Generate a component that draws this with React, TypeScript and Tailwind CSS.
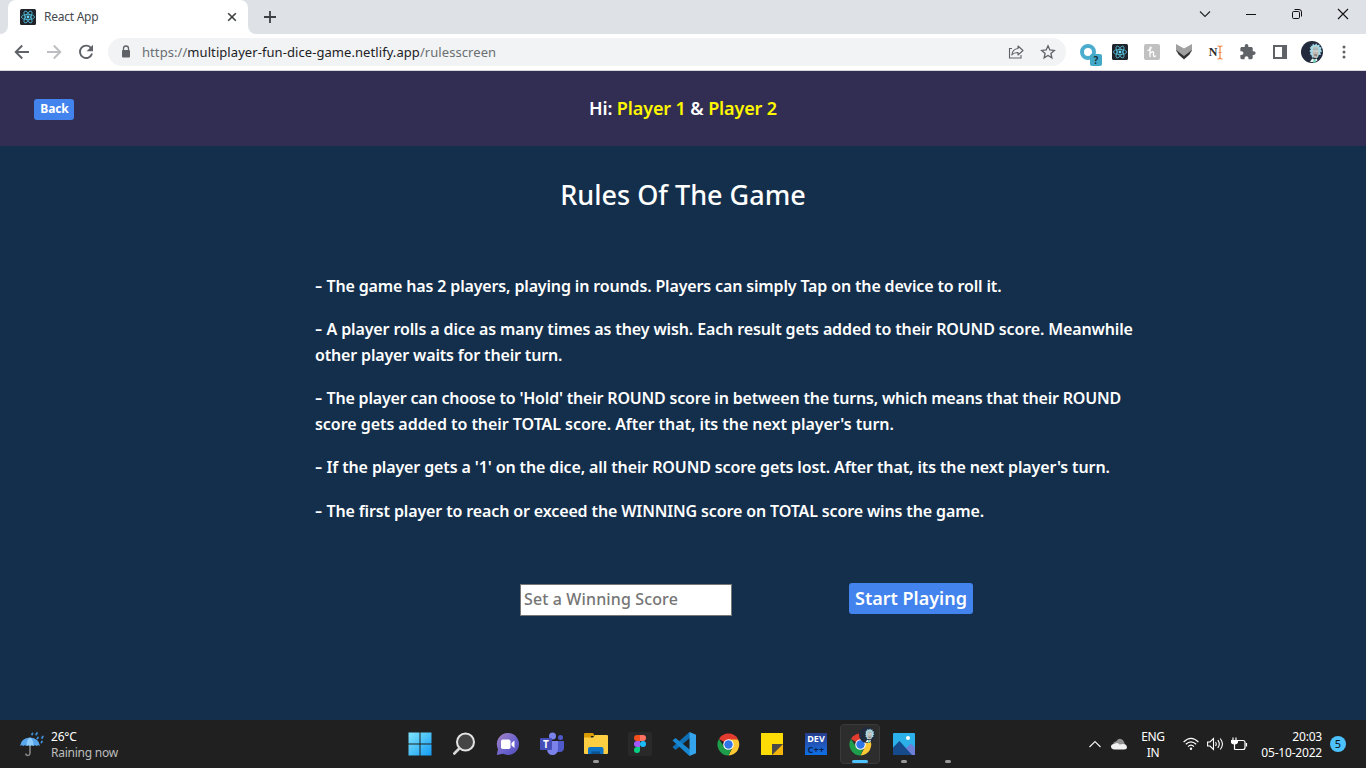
import type { ReactNode } from "react";

const cell = "flex h-full w-11 shrink-0 items-center justify-center relative";

function ReactMark({ size }: { size: number }) {
  return (
    <svg width={size} height={size} viewBox="0 0 16 16">
      <rect width="16" height="16" rx="1.5" fill="#20232a" />
      <g fill="none" stroke="#53c1de" strokeWidth="0.8">
        <ellipse cx="8" cy="8" rx="6.6" ry="2.6" />
        <ellipse cx="8" cy="8" rx="6.6" ry="2.6" transform="rotate(60 8 8)" />
        <ellipse cx="8" cy="8" rx="6.6" ry="2.6" transform="rotate(120 8 8)" />
      </g>
      <circle cx="8" cy="8" r="1.4" fill="#61dafb" />
    </svg>
  );
}

function Avatar({ size }: { size: number }) {
  return (
    <svg width={size} height={size} viewBox="0 0 22 22">
      <circle cx="11" cy="11" r="11" fill="#222a3d" />
      <path d="M9.5 4.500l1.600.600.900-2.600 1.600 1.700 1.800-2 .800 2 2.400-.600-.200 2.300 2.500.600-1.300 2 1.600 1.800-2 1.200.800 2.300-2.300.200-.700 2.400h-6l-.600-2.500-1.600-.600 1-1.800-1.500-1.600 1.600-1.400-1.300-1.900 1.700-.700z" fill="#a5d9e6" />
      <path d="M12 6.500q3-1.800 5.200.300l.200 6q-.800 4.400-2.800 4.400-2.400-.400-2.900-4.200z" fill="#bfb9b2" />
      <path d="M12 8.300h5.300" stroke="#7fb3c1" strokeWidth="0.8" />
      <circle cx="13.400" cy="9.700" r="1" fill="#f4f4f4" />
      <circle cx="16" cy="9.700" r="1" fill="#f4f4f4" />
      <path d="M13.400 9.500v.600M16 9.500v.600M13.200 14H16" stroke="#4a4a50" strokeWidth="0.8" />
      <path d="M9 20.800l2.200-3.400 2.600 1.200 2.100-1 .500 2.100A11 11 0 0 1 9 20.800z" fill="#e9f3f2" />
      <path d="M12.500 18.200l1.300.700 1-.500-.500 3.100-1.900.400z" fill="#63d2b4" />
    </svg>
  );
}

function ChromeMark({ size }: { size: number }) {
  return (
    <svg width={size} height={size} viewBox="0 0 24 24">
      <path d="M12 12L2.040 6.250A11.500 11.500 0 0 1 21.960 6.250z" fill="#e33b2e" />
      <path d="M12 6.750h9.960A11.500 11.500 0 0 1 12 23.500l4.550-8.870z" fill="#fcc934" />
      <path d="M2.040 6.250l5.410 8.380L12 17.250l3-.600-3 6.850A11.500 11.500 0 0 1 2.040 6.250z" fill="#1e9e4a" />
      <circle cx="12" cy="12" r="5.500" fill="#fff" />
      <circle cx="12" cy="12" r="4.400" fill="#2f75e8" />
    </svg>
  );
}

function TabStrip() {
  return (
    <div className="flex h-[34px] items-stretch bg-[#dee1e6]">
      <div className="flex w-2 items-end bg-white">
        <div className="h-full w-full rounded-br-lg bg-[#dee1e6]" />
      </div>
      <div className="flex w-60 items-center rounded-t-lg bg-white pl-3 pr-2">
        <ReactMark size={16} />
        <span className="ml-2 whitespace-nowrap text-[12px] tracking-[-0.25px] text-[#45494d]">React App</span>
        <svg className="ml-auto shrink-0" width="16" height="16" viewBox="0 0 16 16" fill="none" stroke="#3c4043" strokeWidth="1.600">
          <path d="M4.200 4.200l7.600 7.600M11.800 4.200l-7.600 7.600" />
        </svg>
      </div>
      <div className="flex w-2 bg-white">
        <div className="h-full w-full rounded-bl-lg bg-[#dee1e6]" />
      </div>
      <div className="flex w-7 items-center justify-center">
        <svg width="14" height="14" viewBox="0 0 14 14" stroke="#3c4043" strokeWidth="1.800">
          <path d="M7 1v12M1 7h12" />
        </svg>
      </div>
      <div className="ml-auto flex h-7">
        <div className="flex w-[46px] items-center justify-center">
          <svg width="12" height="12" viewBox="0 0 12 12" fill="none" stroke="#222" strokeWidth="1.100"><path d="M1 3.500l5 5 5-5" /></svg>
        </div>
        <div className="flex w-[46px] items-center justify-center">
          <svg width="12" height="12" viewBox="0 0 12 12" stroke="#111"><path d="M1 6.500h10" /></svg>
        </div>
        <div className="flex w-[46px] items-center justify-center">
          <svg width="12" height="12" viewBox="0 0 12 12" fill="none" stroke="#111"><rect x="1.500" y="3.500" width="7" height="7" rx="1.200" /><path d="M3.500 1.500h4.500q2.500 0 2.500 2.500v4.500" /></svg>
        </div>
        <div className="flex w-[46px] items-center justify-center">
          <svg width="12" height="12" viewBox="0 0 12 12" stroke="#111" strokeWidth="1.100"><path d="M1 1l10 10M11 1L1 11" /></svg>
        </div>
      </div>
    </div>
  );
}

function Slot({ children }: { children: ReactNode }) {
  return <div className="relative flex h-full w-8 shrink-0 items-center justify-center">{children}</div>;
}

function Toolbar() {
  return (
    <div className="flex h-[37px] items-center border-b border-[#d5d7da] bg-white pl-1.5">
      <Slot>
        <svg width="16" height="16" viewBox="0 0 16 16" fill="none" stroke="#5f6368" strokeWidth="1.900"><path d="M15 8H2.200M8.200 1.500L1.700 8l6.500 6.500" /></svg>
      </Slot>
      <Slot>
        <svg width="16" height="16" viewBox="0 0 16 16" fill="none" stroke="#bcbec1" strokeWidth="1.900"><path d="M1 8h12.800M7.800 1.500L14.300 8l-6.500 6.500" /></svg>
      </Slot>
      <Slot>
        <svg width="16" height="16" viewBox="0 0 16 16" fill="none"><path d="M13.200 4.200A6.200 6.200 0 1 0 14.100 9.600" stroke="#5f6368" strokeWidth="1.900" /><path d="M15 .800v6.400H8.600z" fill="#5f6368" /></svg>
      </Slot>
      <div className="ml-1.5 flex h-7 w-[958px] items-center rounded-full bg-[#f1f3f4] pl-[13px]">
        <svg width="10" height="14" viewBox="0 0 10 14"><path d="M2.500 6V3.500a2.500 2.500 0 0 1 5 0V6" fill="none" stroke="#5f6368" strokeWidth="1.300" /><rect x="1" y="5" width="8" height="7.500" rx="1" fill="#5f6368" /></svg>
        <span className="ml-[11px] mt-0.5 whitespace-nowrap text-[13px] tracking-[0.07px] text-[#6b6f73]">https://<span className="text-[#202124]">multiplayer-fun-dice-game.netlify.app</span>/rulesscreen</span>
        <svg className="ml-auto" width="16" height="16" viewBox="0 0 16 16" fill="none" stroke="#5f6368" strokeWidth="1.100"><path d="M4 4.500H1.500v9.500h11.500v-3" /><path d="M10 2l5 4.500-5 4.500V8.500q-4-.200-6.200 2.500Q4.500 5 10 4.500z" strokeLinejoin="round" /></svg>
        <svg className="ml-4 mr-2.5" width="16" height="16" viewBox="0 0 16 16" fill="none" stroke="#5f6368" strokeWidth="1.300"><path d="M8 1.800l1.800 4.200 4.500.400-3.400 3 1 4.400L8 11.500l-3.900 2.300 1-4.400-3.400-3 4.500-.400z" /></svg>
      </div>
      <div className="ml-1.5 flex h-full items-center">
        <Slot>
          <svg width="24" height="24" viewBox="0 0 24 24"><circle cx="12" cy="12" r="6" fill="none" stroke="#4bacce" strokeWidth="4" /></svg>
          <span className="absolute left-[18px] top-5 flex h-3 w-3 items-center justify-center rounded-[2px] bg-[#43a9c9] text-[10px] font-bold leading-none text-[#17323b]">?</span>
        </Slot>
        <Slot><ReactMark size={16} /></Slot>
        <Slot>
          <span className="flex h-4 w-4 items-center justify-center rounded-[2px] bg-[#c1c1c1]">
            <svg width="12" height="12" viewBox="0 0 12 12" fill="none" stroke="#fff" strokeWidth="1.300" strokeLinecap="round"><path d="M2 4.500Q5.500 3 5 1.200 4 .500 4 3.500v7M4 7.500Q7.500 4 7.500 7v2.500q.200 1.800 2 .500" /></svg>
          </span>
        </Slot>
        <Slot>
          <svg width="16" height="16" viewBox="0 0 16 16"><path d="M0 0l8 4.500L16 0v7l-8 6-8-6z" fill="#a0a0a0" /><path d="M0 6l8 6 8-6-2.500 4.500L8 15.500l-5.500-5z" fill="#333" /></svg>
        </Slot>
        <Slot>
          <span className="font-['Liberation_Serif',serif] text-[12px] font-bold text-[#2d2d2d]">N</span>
          <svg width="6" height="15" viewBox="0 0 6 15" fill="none" stroke="#ee8747" strokeWidth="1.200"><path d="M.500 1Q3 1 3 2.500v10Q3 14 .500 14M5.500 1Q3 1 3 2.500M5.500 14Q3 14 3 12.500M1.500 7.500h3" /></svg>
        </Slot>
        <Slot>
          <svg width="16" height="16" viewBox="1.500 1 22 22" fill="#5f6368"><path d="M20.500 11H19V7c0-1.100-.900-2-2-2h-4V3.500a2.500 2.500 0 0 0-5 0V5H4c-1.100 0-2 .900-2 2v3.800h1.500a2.700 2.700 0 0 1 0 5.400H2V20c0 1.100.900 2 2 2h3.800v-1.500a2.700 2.700 0 0 1 5.400 0V22H17c1.100 0 2-.900 2-2v-4h1.500a2.500 2.500 0 0 0 0-5z" /></svg>
        </Slot>
        <Slot>
          <svg width="14" height="14" viewBox="0 0 14 14"><rect x="1" y="1" width="12" height="12" fill="none" stroke="#5f6368" strokeWidth="2" /><path d="M9 1h5v12H9z" fill="#5f6368" /></svg>
        </Slot>
        <Slot><Avatar size={22} /></Slot>
        <Slot>
          <svg width="4" height="14" viewBox="0 0 4 14" fill="#5f6368"><circle cx="2" cy="2" r="1.500" /><circle cx="2" cy="7" r="1.500" /><circle cx="2" cy="12" r="1.500" /></svg>
        </Slot>
      </div>
    </div>
  );
}

type Line = { text: string; track: string };

const rules: Line[][] = [
  [{ text: "The game has 2 players, playing in rounds. Players can simply Tap on the device to roll it.", track: "tracking-[-0.15px]" }],
  [
    { text: "A player rolls a dice as many times as they wish. Each result gets added to their ROUND score. Meanwhile", track: "tracking-[-0.125px]" },
    { text: "other player waits for their turn.", track: "tracking-[-0.16px]" },
  ],
  [
    { text: "The player can choose to 'Hold' their ROUND score in between the turns, which means that their ROUND", track: "tracking-[-0.19px]" },
    { text: "score gets added to their TOTAL score. After that, its the next player's turn.", track: "tracking-[-0.045px]" },
  ],
  [{ text: "If the player gets a '1' on the dice, all their ROUND score gets lost. After that, its the next player's turn.", track: "tracking-[-0.12px]" }],
  [{ text: "The first player to reach or exceed the WINNING score on TOTAL score wins the game.", track: "tracking-[-0.132px]" }],
];

function Game() {
  return (
    <main className="flex h-[649px] flex-col bg-[#142f4c] font-['Noto_Sans',sans-serif] font-semibold text-white">
      <header className="grid h-[75px] grid-cols-[1fr_auto_1fr] items-center bg-[#322d52] px-[34px]">
        <button className="mt-0.5 flex h-[21px] w-10 items-center justify-center rounded-[3px] bg-[#4283ed] pb-px pl-px text-[12px] font-bold tracking-[-0.1px]">Back</button>
        <h2 className="whitespace-nowrap text-[18px] tracking-[-0.12px]">Hi: <span className="text-[#fff700]">Player 1</span> &amp; <span className="text-[#fff700]">Player 2</span></h2>
      </header>
      <h1 className="mt-7 text-center text-[27px] font-medium leading-[42px]">Rules Of The Game</h1>
      <div className="ml-[315px] mt-[57px] flex flex-col gap-[17.15px] text-[16px] leading-[26px]">
        {rules.map((lines) => (
          <p key={lines[0].text}>
            {lines.map((line, i) => (
              <span key={line.text} className={`block whitespace-nowrap ${line.track}`}>
                {i === 0 && <span className="tracking-[1.100px]"><span className="inline-block origin-left scale-x-140">-</span> </span>}
                {line.text}
              </span>
            ))}
          </p>
        ))}
      </div>
      <div className="ml-[520px] mt-[59.6px] flex items-start">
        <div className="mt-px flex h-8 w-[212px] items-center border border-[#767676] bg-white pb-0.5 pl-[3px] text-[16px] font-medium tracking-[0.13px] text-[#757575]">Set a Winning Score</div>
        <button className="ml-[117px] flex h-[31px] w-[124px] items-center justify-center whitespace-nowrap rounded-[3px] bg-[#4283ed] text-[18px]">Start Playing</button>
      </div>
    </main>
  );
}

function Dot() {
  return <span className="absolute bottom-[5px] left-[19px] h-[3px] w-1.5 rounded-full bg-[#9a9a9a]" />;
}

function Taskbar() {
  return (
    <footer className="grid h-12 grid-cols-[398px_572px_1fr] bg-[#202020] text-white">
      <div className="flex items-center pl-5">
        <svg width="25" height="25" viewBox="0 0 25 25" fill="none">
          <path d="M10 13v8.500q-.300 2-2.200 2t-2-2" stroke="#8b8b8b" strokeWidth="1.500" />
          <path d="M0 14Q1 6 10 5.500 19 6 20 14q-1.600-1.500-3.300 0-1.700-1.500-3.300 0-1.700-1.500-3.400 0-1.700-1.500-3.300 0-1.700-1.500-3.400 0Q1.500 12.500 0 14z" fill="#58a6ec" />
          <path d="M6.700 14Q6 8 10 5.500q4 2.500 3.400 8.500-1.700-1.500-3.400 0-1.700-1.500-3.300 0z" fill="#8dcbfb" />
          <path d="M12.500 1.500l-.500 1M17 1l-.800 1.500M18 5.500l-.600 1M22.800 4.500l-.800 1.500M22 9.500l-.600 1" stroke="#3c8dd9" strokeWidth="1.800" strokeLinecap="round" />
        </svg>
        <div className="ml-1.5 mt-0.5 text-[12px] leading-4">
          <div className="tracking-[-0.2px]">26°C</div>
          <div className="tracking-[-0.25px] text-[#bdbdbd]">Raining now</div>
        </div>
      </div>
      <div className="flex items-center">
        <div className={cell}>
          <svg className="mr-px" width="24" height="24" viewBox="0 0 24 24"><defs><linearGradient id="win" x1="0" y1="0" x2="1" y2="1"><stop stopColor="#80e5fb" /><stop offset="1" stopColor="#149cf5" /></linearGradient></defs><path d="M.500.500h11v11H.500zM12.500.500h11v11h-11zM.500 12.500h11v11H.500zM12.500 12.500h11v11h-11z" fill="url(#win)" /></svg>
        </div>
        <div className={cell}>
          <svg width="24" height="24" viewBox="0 0 24 24"><circle cx="13.500" cy="10" r="8.500" fill="#454545" stroke="#e4e4e4" strokeWidth="2" /><path d="M7.300 16.500l-5 5" stroke="#d8d8d8" strokeWidth="2.600" strokeLinecap="round" /></svg>
        </div>
        <div className={cell}>
          <svg width="24" height="24" viewBox="0 0 24 24"><defs><linearGradient id="chat" x1="0" y1="0" x2="1" y2="1"><stop stopColor="#a884c2" /><stop offset=".6" stopColor="#6862cf" /><stop offset="1" stopColor="#554bb5" /></linearGradient></defs><path d="M12 1a11 11 0 1 1-5 20.800L.800 23l1.200-6A11 11 0 0 1 12 1z" fill="url(#chat)" /><rect x="5" y="7.500" width="9.500" height="9.500" rx="1.800" fill="#fff" /><path d="M15.500 11l3-2.500v7.500l-3-2.500z" fill="#fff" /></svg>
        </div>
        <div className={cell}>
          <svg width="24" height="24" viewBox="0 0 24 24"><circle cx="12.500" cy="4" r="3.500" fill="#7b83eb" /><circle cx="20.500" cy="5.500" r="2.500" fill="#5059c9" /><path d="M17 9h7v7q-.500 4-4 4h-3z" fill="#5059c9" /><path d="M7 9h11v8q-.500 6-5.500 6T7 17z" fill="#7b83eb" /><rect x="0" y="6" width="12" height="12" rx="1" fill="#464eb8" /></svg>
          <span className="absolute left-[13px] top-[17px] text-[10px] font-bold leading-[14px]">T</span>
        </div>
        <div className={cell}>
          <svg width="24" height="24" viewBox="0 0 24 24"><path d="M0 2q0-1 1-1h8l2 3h-4l-1 5H0z" fill="#d99b05" /><path d="M0 5.500h9L11 3h12q1 0 1 1v17q0 1-1 1H1q-1 0-1-1z" fill="#fdce42" /><path d="M4 22v-5q0-2 2-2h11.500q2 0 2 2v5z" fill="#0e73c4" /><path d="M7.500 19.500h8.500V22H7.500z" fill="#0b5391" /></svg>
          <Dot />
        </div>
        <div className={cell}>
          <svg width="24" height="24" viewBox="0 0 24 24"><rect width="24" height="24" rx="2" fill="#292929" /><path d="M9 3h3v6H9a3 3 0 0 1 0-6z" fill="#f24e1e" /><path d="M12 3h3a3 3 0 0 1 0 6h-3z" fill="#ff7262" /><path d="M9 9h3v6H9a3 3 0 0 1 0-6z" fill="#a259ff" /><circle cx="15" cy="12" r="3" fill="#1abcfe" /><path d="M9 15h3v3a3 3 0 1 1-3-3z" fill="#0acf83" /></svg>
        </div>
        <div className={cell}>
          <svg width="24" height="24" viewBox="0 0 24 24"><path d="M.500 15L17.500 0l1.500 5L3.500 18z" fill="#0f6fb4" /><path d="M.500 8.500l3-2.500L19 18.500 17.500 24z" fill="#1887d2" /><path d="M17.500 0L24 2.800v18.400L17.500 24z" fill="#34a4ec" /></svg>
        </div>
        <div className={cell}><ChromeMark size={23} /></div>
        <div className={cell}>
          <svg width="22" height="22" viewBox="0 0 22 22"><path d="M0 0h22v11H11v11H0z" fill="#fddb05" /><path d="M11 11h11L11 22z" fill="#4a4a4a" /><path d="M22 11v11H11z" fill="#f6b50b" /></svg>
        </div>
        <div className={cell}>
          <div className="flex h-[22px] w-[22px] flex-col items-center bg-linear-to-b from-[#263c8c] to-[#0870e8] font-bold">
            <span className="text-[9px] leading-[12px]">DEV</span>
            <span className="text-[9px] leading-[10px] tracking-[0.3px] text-[#052452]">C++</span>
          </div>
        </div>
        <div className={cell}>
          <div className="flex h-10 w-10 items-center justify-center rounded-[4px] border border-[#3a3a3a] bg-[#2d2d2d]"><ChromeMark size={23} /></div>
          <span className="absolute left-[21px] top-[7px]"><Avatar size={16} /></span>
          <span className="absolute bottom-[5px] left-3.5 h-[3px] w-4 rounded-full bg-[#4cc2ff]" />
        </div>
        <div className={cell}>
          <svg width="22" height="22" viewBox="0 0 22 22"><rect width="22" height="22" rx="1" fill="#2bb0ea" /><circle cx="15" cy="5" r="2" fill="#fff" /><path d="M10 18l8-7.500 4 4V22H10z" fill="#6b80d6" /><path d="M0 14.500L6.500 8 19 22H0z" fill="#164a8a" /></svg>
          <Dot />
        </div>
        <div className={cell}><Dot /></div>
      </div>
      <div className="flex items-center pl-[118px]">
        <svg width="14" height="14" viewBox="0 0 14 14" fill="none" stroke="#eee" strokeWidth="1.200"><path d="M1.500 10L7 4.500l5.500 5.500" /></svg>
        <svg className="ml-[9px]" width="16" height="12" viewBox="0 0 16 12"><path d="M2 7Q2 3.500 5 3.500 7 0 10 1t3.500 4.500L16 8z" fill="#929292" /><path d="M3.500 11.500Q0 11.200 0 8.500T3.500 6Q6 4 8.500 6.500q6-2 7.500 2.500 0 2.500-3 2.500z" fill="#f1f1f1" /></svg>
        <div className="ml-3 mt-0.5 w-7 text-center text-[12px] leading-4 tracking-[-0.3px]"><div>ENG</div><div>IN</div></div>
        <svg className="ml-4" width="16" height="14" viewBox="0 0 16 14" fill="none" stroke="#fff" strokeWidth="1.200"><path d="M.600 5Q8-2.200 15.400 5M2.800 7.300q5.200-5 10.400 0M5 9.600q3-2.800 6 0" /><circle cx="8" cy="11.800" r="1.200" fill="#fff" stroke="none" /></svg>
        <svg className="ml-2" width="17" height="14" viewBox="0 0 17 14" fill="none" stroke="#fff" strokeWidth="1.100"><path d="M.600 5v4H3l3.500 3.500v-11L3 5zM8.500 5q1.500 2 0 4M10.800 3.200q3 3.800 0 7.600M13.200 1.500q4.500 5.500 0 11" /></svg>
        <svg className="ml-[7px]" width="17" height="14" viewBox="0 0 17 14" fill="none" stroke="#fff" strokeWidth="1.200"><path d="M2 .500v3M5 .500v3M3.500 6v6.500M6.500 3.500H12q2 0 2 2v5q0 2-2 2H3.500M15.500 6v3.500" /><path d="M.500 3.500h6v1q0 2.500-3 2.500t-3-2.500z" fill="#fff" /></svg>
        <div className="ml-[13px] mr-[7px] mt-0.5 w-[62px] whitespace-nowrap pr-px text-right text-[12px] leading-4 tracking-[-0.2px]"><div>20:03</div><div>05-10-2022</div></div>
        <span className="flex h-4 w-4 items-center justify-center rounded-full bg-[#4cc2ff] text-[11px] text-[#111]">5</span>
      </div>
    </footer>
  );
}

export default function App() {
  return (
    <div className="h-[768px] w-[1366px] overflow-hidden font-['Noto_Sans',sans-serif]">
      <TabStrip />
      <Toolbar />
      <Game />
      <Taskbar />
    </div>
  );
}
